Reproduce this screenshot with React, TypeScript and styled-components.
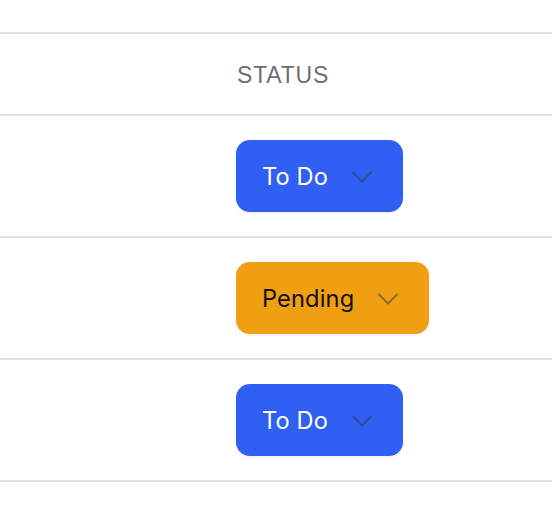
import React from 'react';
import styled, { createGlobalStyle } from 'styled-components';

type Status = 'todo' | 'pending';

const GlobalStyle = createGlobalStyle`
  body {
    margin: 0;
    background: #ffffff;
    font-family: Inter, "Liberation Sans", sans-serif;
  }
`;

const Table = styled.div`
  padding-top: 32px;
`;

const Row = styled.div<{ header?: boolean }>`
  display: grid;
  grid-template-columns: 237px 1fr;
  align-items: center;
  border-top: 2px solid #e3e3e3;
  height: ${props => (props.header ? '80px' : '120px')};

  &:last-child {
    border-bottom: 2px solid #e3e3e3;
  }
`;

const HeaderCell = styled.div`
  font-family: "Liberation Sans", Arial, sans-serif;
  font-size: 23px;
  letter-spacing: 0.8px;
  color: #6e6e6e;
  padding-top: 2px;
`;

const Cell = styled.div`
  margin-left: -1px;
`;

const Badge = styled.button<{ status: Status }>`
  display: inline-flex;
  align-items: center;
  gap: 22px;
  height: 72px;
  padding: 0 29px 0 26px;
  border: none;
  border-radius: 14px;
  font-family: Inter, "Liberation Sans", sans-serif;
  font-size: 23.6px;
  letter-spacing: 0.15px;
  cursor: pointer;
  box-shadow: 0 1px 3px rgba(0, 0, 0, 0.08);
  background: ${props => (props.status === 'todo' ? '#2f5ff3' : '#f09e12')};
  color: ${props => (props.status === 'todo' ? '#ffffff' : '#111111')};

  svg {
    color: rgba(60, 60, 80, 0.55);
    margin-top: 1px;
  }
`;

const labels: Record<Status, string> = {
  todo: 'To Do',
  pending: 'Pending',
};

const Chevron = () => (
  <svg width="24" height="24" viewBox="0 0 24 24" fill="none" stroke="currentColor" strokeWidth="2" strokeLinecap="round" strokeLinejoin="round">
    <path d="M3 7.5l9 9 9-9" />
  </svg>
);

const rows: Status[] = ['todo', 'pending', 'todo'];

export default function App() {
  return (
    <>
      <GlobalStyle />
      <Table>
        <Row header>
          <div />
          <HeaderCell>STATUS</HeaderCell>
        </Row>
        {rows.map((status, i) => (
          <Row key={i}>
            <div />
            <Cell>
              <Badge status={status}>
                {labels[status]}
                <Chevron />
              </Badge>
            </Cell>
          </Row>
        ))}
      </Table>
    </>
  );
}
